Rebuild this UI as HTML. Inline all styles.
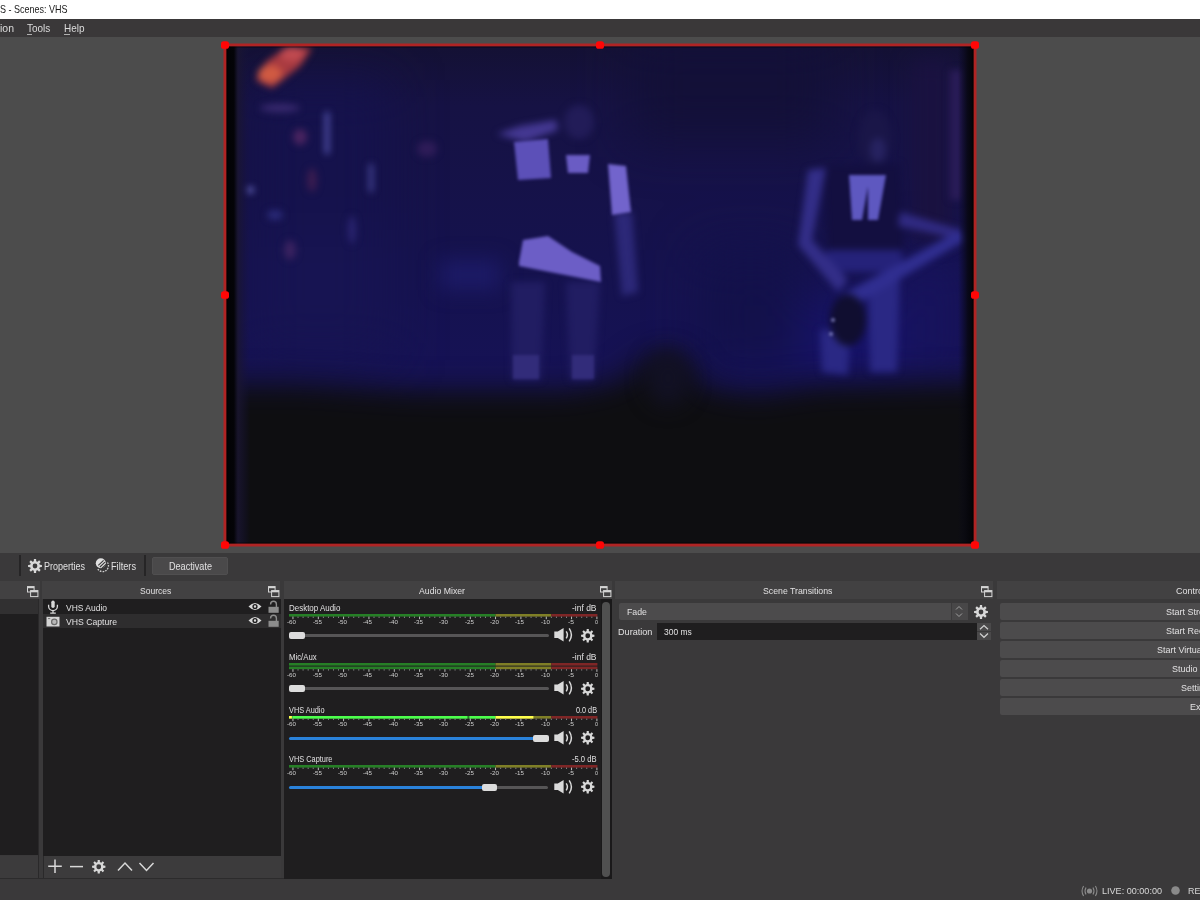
<!DOCTYPE html>
<html><head><meta charset="utf-8">
<style>
*{margin:0;padding:0;box-sizing:border-box}
html,body{width:1200px;height:900px;overflow:hidden;background:#3a393a;font-family:"Liberation Sans",sans-serif;color:#e1e0e1}
.a{position:absolute}
.t{position:absolute;white-space:nowrap}
svg{overflow:visible}
</style></head><body>
<div class="a" style="left:0px;top:0px;width:1200px;height:19px;background:#ffffff;"></div>
<div class="t" style="left:0.00px;top:3.77px;font-size:11.5px;line-height:11.5px;color:#1b1b1b;transform:scaleX(0.783);transform-origin:0 0;">S - Scenes: VHS</div>
<div class="a" style="left:0px;top:19px;width:1200px;height:18px;background:#3a3839;"></div>
<div class="t" style="left:0.00px;top:22.97px;font-size:10.9px;line-height:10.9px;color:#dcdcdc;transform:scaleX(0.962);transform-origin:0 0;">ion</div>
<div class="t" style="left:26.60px;top:22.97px;font-size:10.9px;line-height:10.9px;color:#dcdcdc;transform:scaleX(0.915);transform-origin:0 0;">Tools</div>
<div class="a" style="left:26.6px;top:33.6px;width:5px;height:1px;background:#b0b0b0;"></div>
<div class="t" style="left:63.80px;top:22.97px;font-size:10.9px;line-height:10.9px;color:#dcdcdc;transform:scaleX(0.915);transform-origin:0 0;">Help</div>
<div class="a" style="left:63.8px;top:33.6px;width:6px;height:1px;background:#b0b0b0;"></div>
<div class="a" style="left:0px;top:37px;width:1200px;height:516px;background:#4c4c4c;"></div>
<!-- video -->
<svg class="a" style="left:0;top:0" width="1200" height="560" viewBox="0 0 1200 560">
<defs>
<filter id="b1" color-interpolation-filters="sRGB" x="-50%" y="-50%" width="200%" height="200%"><feGaussianBlur stdDeviation="1.8"/></filter>
<filter id="b3" color-interpolation-filters="sRGB" x="-50%" y="-50%" width="200%" height="200%"><feGaussianBlur stdDeviation="3.5"/></filter>
<filter id="b8" color-interpolation-filters="sRGB" x="-50%" y="-50%" width="200%" height="200%"><feGaussianBlur stdDeviation="10"/></filter>
<filter id="b14" color-interpolation-filters="sRGB" x="-50%" y="-50%" width="200%" height="200%"><feGaussianBlur stdDeviation="15"/></filter>
<filter id="b20" color-interpolation-filters="sRGB" x="-50%" y="-50%" width="200%" height="200%"><feGaussianBlur stdDeviation="25"/></filter>
<linearGradient id="vbg" x1="0" y1="46" x2="0" y2="544" gradientUnits="userSpaceOnUse">
<stop offset="0" stop-color="#141134"/>
<stop offset="0.12" stop-color="#161244"/>
<stop offset="0.45" stop-color="#15124e"/>
<stop offset="0.68" stop-color="#161256"/>
<stop offset="0.8" stop-color="#111022"/>
<stop offset="1" stop-color="#0e0e10"/>
</linearGradient>
<linearGradient id="lstrip" x1="226" y1="0" x2="250" y2="0" gradientUnits="userSpaceOnUse">
<stop offset="0" stop-color="#020204" stop-opacity="1"/>
<stop offset="0.33" stop-color="#040408" stop-opacity="1"/>
<stop offset="0.5" stop-color="#1a1630" stop-opacity="0.85"/>
<stop offset="1" stop-color="#16123a" stop-opacity="0"/>
</linearGradient>
<linearGradient id="rstrip" x1="974" y1="0" x2="958" y2="0" gradientUnits="userSpaceOnUse">
<stop offset="0" stop-color="#020204" stop-opacity="1"/>
<stop offset="0.4" stop-color="#06060c" stop-opacity="0.8"/>
<stop offset="1" stop-color="#08081a" stop-opacity="0"/>
</linearGradient>
<clipPath id="vclip"><rect x="226" y="46" width="748" height="498"/></clipPath>
</defs>
<g clip-path="url(#vclip)">
<rect x="226" y="46" width="748" height="498" fill="url(#vbg)"/>
<g filter="url(#b20)">
<rect x="250" y="80" width="140" height="150" fill="#15124c"/>
<rect x="250" y="230" width="140" height="130" fill="#171452"/>
<rect x="630" y="30" width="200" height="110" fill="#131038"/>
<rect x="890" y="250" width="80" height="140" fill="#17135c"/>
<rect x="700" y="300" width="200" height="80" fill="#17136a"/>
<rect x="700" y="250" width="100" height="120" fill="#13114a"/>
</g>
<g filter="url(#b8)">
<rect x="912" y="60" width="40" height="180" fill="#1a1240"/>
<rect x="440" y="260" width="60" height="30" fill="#1c1a66"/>
</g>
<g filter="url(#b3)">
<path d="M256 80 L266 62 L288 46 L312 48 L300 66 L272 88 Z" fill="#a83a40"/>
<ellipse cx="270" cy="74" rx="12" ry="9" fill="#d05a42"/>
<ellipse cx="292" cy="54" rx="12" ry="7" fill="#c04a50"/>
<rect x="325" y="112" width="4" height="42" fill="#5a5ab4"/>
<rect x="369" y="164" width="4" height="28" fill="#48489a"/>
<ellipse cx="300" cy="137" rx="7" ry="8" fill="#4a2460"/>
<ellipse cx="290" cy="250" rx="6" ry="10" fill="#3a2260"/>
<ellipse cx="312" cy="180" rx="5" ry="12" fill="#3a1c50"/>
<ellipse cx="275" cy="215" rx="8" ry="5" fill="#2a2a78"/>
<ellipse cx="352" cy="230" rx="4" ry="14" fill="#2a2470"/>
<ellipse cx="427" cy="149" rx="10" ry="8" fill="#2e1c58"/>
<ellipse cx="280" cy="108" rx="20" ry="4" fill="#3a2a70"/>
<rect x="950" y="70" width="12" height="130" fill="#2a1c58"/>
<ellipse cx="250" cy="190" rx="4" ry="3" fill="#6a6ac0"/>
</g>
<g filter="url(#b14)">
<path d="M190 384 L226 384 L300 384 L412 392 L569 392 L618 382 L640 362 L664 352 L690 364 L704 388 L756 396 L819 386 L900 384 L974 382 L1010 382 L1010 580 L190 580 Z" fill="#0e0e11"/>
</g>
<g filter="url(#b8)">
<ellipse cx="668" cy="378" rx="22" ry="28" fill="#121124"/>
</g>
<g filter="url(#b3)">
<path d="M511 282 L545 282 L541 380 L512 380 Z" fill="#211d62"/>
<path d="M566 282 L600 282 L594 380 L570 380 Z" fill="#211d62"/>
<path d="M614 212 L632 212 L638 292 L622 296 Z" fill="#2c2878"/>
<path d="M497 134 L520 126 L556 120 L558 130 L525 142 Z" fill="#443892"/>
<ellipse cx="579" cy="122" rx="15" ry="17" fill="#221c58"/>
</g>
<g filter="url(#b1)">
<path d="M514 142 L548 139 L551 178 L518 180 Z" fill="#5c50b8"/>
<path d="M566 155 L590 155 L588 173 L568 173 Z" fill="#6a5cc4"/>
<path d="M608 164 L626 166 L631 212 L612 215 Z" fill="#7264cc"/>
<path d="M519 262 L523 240 L548 236 L572 252 L600 266 L601 282 L519 266 Z" fill="#6c5ec6"/>
<rect x="513" y="355" width="26" height="24" fill="#322c7a"/>
<rect x="572" y="355" width="22" height="24" fill="#322c7a"/>
</g>
<g filter="url(#b3)">
<ellipse cx="875" cy="138" rx="17" ry="28" fill="#1a1648"/>
<ellipse cx="878" cy="150" rx="8" ry="12" fill="#262260"/>
<path d="M824 166 L900 164 L904 250 L828 252 Z" fill="#130f40"/>
<path d="M826 250 L902 250 L902 272 L828 272 Z" fill="#25227a"/>
<path d="M808 170 L826 168 L812 240 L848 280 L838 292 L798 245 Z" fill="#332e88"/>
<path d="M900 212 L962 230 L963 240 L898 226 Z" fill="#302a82"/>
<path d="M868 282 L900 272 L897 372 L870 372 Z" fill="#2a2884"/>
<path d="M820 330 L850 330 L848 375 L822 372 Z" fill="#2a2884"/>
<path d="M840 296 L960 230 L966 240 L850 308 Z" fill="#302e90"/>
<ellipse cx="848" cy="320" rx="18" ry="26" fill="#100e30"/>
</g>
<g filter="url(#b1)">
<path d="M849 175 L870 175 L862 220 L852 220 Z" fill="#5e58c0"/>
<path d="M868 175 L886 175 L878 220 L868 220 Z" fill="#5e58c0"/>
<circle cx="833" cy="320" r="1.8" fill="#9090d0"/><circle cx="831" cy="334" r="1.8" fill="#9090d0"/>
</g>
</g>
<rect x="226" y="46" width="24" height="498" fill="url(#lstrip)"/>
<rect x="958" y="46" width="16" height="498" fill="url(#rstrip)"/>
<rect x="225" y="45" width="750" height="500" fill="none" stroke="#b02424" stroke-width="3"/>
<rect x="227" y="47" width="746" height="496" fill="none" stroke="#000" stroke-opacity="0.5" stroke-width="1"/>
<g fill="#ff0606"><rect x="221" y="41.2" width="8" height="7.6" rx="2.6"/><rect x="596" y="41.2" width="8" height="7.6" rx="2.6"/><rect x="971" y="41.2" width="8" height="7.6" rx="2.6"/><rect x="221" y="291.2" width="8" height="7.6" rx="2.6"/><rect x="971" y="291.2" width="8" height="7.6" rx="2.6"/><rect x="221" y="541.2" width="8" height="7.6" rx="2.6"/><rect x="596" y="541.2" width="8" height="7.6" rx="2.6"/><rect x="971" y="541.2" width="8" height="7.6" rx="2.6"/></g>
</svg>

<div class="a" style="left:0px;top:553px;width:1200px;height:28px;background:#3a393a;"></div>
<div class="a" style="left:19px;top:555px;width:2px;height:21px;background:#262526;"></div>
<div class="a" style="left:144px;top:555px;width:2px;height:21px;background:#262526;"></div>
<svg class="a" style="left:27.700000000000003px;top:558.7px" width="14" height="14" viewBox="0 0 14 14"><path d="M11.82 5.80 L13.91 5.90 L13.91 8.10 L11.82 8.20 L11.26 9.56 L12.66 11.11 L11.11 12.66 L9.56 11.26 L8.20 11.82 L8.10 13.91 L5.90 13.91 L5.80 11.82 L4.44 11.26 L2.89 12.66 L1.34 11.11 L2.74 9.56 L2.18 8.20 L0.09 8.10 L0.09 5.90 L2.18 5.80 L2.74 4.44 L1.34 2.89 L2.89 1.34 L4.44 2.74 L5.80 2.18 L5.90 0.09 L8.10 0.09 L8.20 2.18 L9.56 2.74 L11.11 1.34 L12.66 2.89 L11.26 4.44 Z M9.38 7.00 A2.3800000000000003 2.3800000000000003 0 1 0 4.62 7.00 A2.3800000000000003 2.3800000000000003 0 1 0 9.38 7.00 Z" fill="#d8d8d8" fill-rule="evenodd"/></svg>
<div class="t" style="left:44.00px;top:561.01px;font-size:10.5px;line-height:10.5px;color:#e1e0e1;transform:scaleX(0.856);transform-origin:0 0;">Properties</div>
<svg class="a" style="left:94px;top:556px" width="17" height="18" viewBox="0 0 17 18"><path d="M13.5 6.5 A5.6 5.6 0 1 1 3.8 13" fill="none" stroke="#d0d0d0" stroke-width="1.3" stroke-dasharray="1.6 1.1"/><circle cx="6.8" cy="7.2" r="5" fill="#e0e0e0"/><path d="M4.3 9.3 L9.6 4.4 M5.9 11 L11 6.1 M7.8 12.3 L12 8.4" stroke="#3a393a" stroke-width="1.1"/></svg>
<div class="t" style="left:111.00px;top:561.01px;font-size:10.5px;line-height:10.5px;color:#e1e0e1;transform:scaleX(0.875);transform-origin:0 0;">Filters</div>
<div class="a" style="left:152px;top:556.5px;width:76.3px;height:18.7px;background:#4a494a;border-radius:2px;border:1px solid #504f50;"></div>
<div class="t" style="left:168.50px;top:561.01px;font-size:10.5px;line-height:10.5px;color:#e1e0e1;transform:scaleX(0.866);transform-origin:0 0;">Deactivate</div>
<div class="a" style="left:0px;top:581px;width:40px;height:18px;background:#424142;"></div>
<svg class="a" style="left:27px;top:585.5px" width="12" height="12" viewBox="0 0 12 12"><rect x="0.5" y="0.6" width="6.6" height="5.4" fill="none" stroke="#d4d4d4" stroke-width="1"/><rect x="0.5" y="0.6" width="6.6" height="1.6" fill="#d4d4d4"/><rect x="3.6" y="4.6" width="7.3" height="6" fill="#424142" stroke="#d4d4d4" stroke-width="1"/><rect x="3.6" y="4.6" width="7.3" height="1.7" fill="#d4d4d4"/></svg>
<div class="a" style="left:42px;top:581px;width:238px;height:18px;background:#424142;"></div>
<div class="t" style="left:139.70px;top:585.70px;font-size:9.8px;line-height:9.8px;color:#e1e0e1;transform:scaleX(0.873);transform-origin:0 0;">Sources</div>
<svg class="a" style="left:268px;top:585.5px" width="12" height="12" viewBox="0 0 12 12"><rect x="0.5" y="0.6" width="6.6" height="5.4" fill="none" stroke="#d4d4d4" stroke-width="1"/><rect x="0.5" y="0.6" width="6.6" height="1.6" fill="#d4d4d4"/><rect x="3.6" y="4.6" width="7.3" height="6" fill="#424142" stroke="#d4d4d4" stroke-width="1"/><rect x="3.6" y="4.6" width="7.3" height="1.7" fill="#d4d4d4"/></svg>
<div class="a" style="left:284px;top:581px;width:328px;height:18px;background:#424142;"></div>
<div class="t" style="left:418.70px;top:585.70px;font-size:9.8px;line-height:9.8px;color:#e1e0e1;transform:scaleX(0.889);transform-origin:0 0;">Audio Mixer</div>
<svg class="a" style="left:600px;top:585.5px" width="12" height="12" viewBox="0 0 12 12"><rect x="0.5" y="0.6" width="6.6" height="5.4" fill="none" stroke="#d4d4d4" stroke-width="1"/><rect x="0.5" y="0.6" width="6.6" height="1.6" fill="#d4d4d4"/><rect x="3.6" y="4.6" width="7.3" height="6" fill="#424142" stroke="#d4d4d4" stroke-width="1"/><rect x="3.6" y="4.6" width="7.3" height="1.7" fill="#d4d4d4"/></svg>
<div class="a" style="left:615px;top:581px;width:378px;height:18px;background:#424142;"></div>
<div class="t" style="left:763.25px;top:585.70px;font-size:9.8px;line-height:9.8px;color:#e1e0e1;transform:scaleX(0.892);transform-origin:0 0;">Scene Transitions</div>
<svg class="a" style="left:981px;top:585.5px" width="12" height="12" viewBox="0 0 12 12"><rect x="0.5" y="0.6" width="6.6" height="5.4" fill="none" stroke="#d4d4d4" stroke-width="1"/><rect x="0.5" y="0.6" width="6.6" height="1.6" fill="#d4d4d4"/><rect x="3.6" y="4.6" width="7.3" height="6" fill="#424142" stroke="#d4d4d4" stroke-width="1"/><rect x="3.6" y="4.6" width="7.3" height="1.7" fill="#d4d4d4"/></svg>
<div class="a" style="left:997px;top:581px;width:203px;height:18px;background:#424142;"></div>
<div class="t" style="left:1175.60px;top:585.70px;font-size:9.8px;line-height:9.8px;color:#e1e0e1;transform:scaleX(0.916);transform-origin:0 0;">Controls</div>
<div class="a" style="left:0px;top:599px;width:38px;height:256px;background:#1f1e1f;"></div>
<div class="a" style="left:38px;top:599px;width:1px;height:279px;background:#2a292a;"></div>
<div class="a" style="left:42.5px;top:599px;width:1px;height:279px;background:#2a292a;"></div>
<div class="a" style="left:0px;top:599px;width:38px;height:15px;background:#313031;"></div>
<div class="a" style="left:0px;top:855.75px;width:38px;height:22.25px;background:#3c3b3c;"></div>
<div class="a" style="left:42.5px;top:599px;width:238px;height:256.5px;background:#1f1e1f;"></div>
<div class="a" style="left:42.5px;top:613.7px;width:238px;height:14.3px;background:#2e2d2e;"></div>
<svg class="a" style="left:47px;top:600px" width="12" height="14" viewBox="0 0 12 14"><rect x="4.3" y="0.5" width="3.4" height="7.5" rx="1.7" fill="#d8d8d8"/><path d="M1.6 4.8 V6.3 A4.4 4.4 0 0 0 10.4 6.3 V4.8" fill="none" stroke="#d8d8d8" stroke-width="1.3"/><path d="M6 10.8 V13 M3.2 13.2 H8.8" stroke="#d8d8d8" stroke-width="1.2"/></svg>
<div class="t" style="left:66.00px;top:602.70px;font-size:9.8px;line-height:9.8px;color:#e1e0e1;transform:scaleX(0.865);transform-origin:0 0;">VHS Audio</div>
<svg class="a" style="left:45.5px;top:615.5px" width="14" height="11" viewBox="0 0 14 11"><rect x="0.5" y="0.8" width="13" height="9.7" fill="#d4d4d4"/><rect x="2" y="2" width="2.2" height="1.1" fill="#808080"/><circle cx="8.3" cy="5.9" r="2.7" fill="#b8b8b8" stroke="#6a6a6a" stroke-width="1.2"/></svg>
<div class="t" style="left:66.00px;top:616.70px;font-size:9.8px;line-height:9.8px;color:#e1e0e1;transform:scaleX(0.883);transform-origin:0 0;">VHS Capture</div>
<svg class="a" style="left:247.5px;top:602.2px" width="14" height="9" viewBox="0 0 14 9"><path d="M0.5 4.5 Q7 -2.5 13.5 4.5 Q7 11.5 0.5 4.5 Z" fill="#d8d8d8"/><circle cx="7" cy="4.5" r="2.6" fill="#1f1e1f"/><circle cx="7" cy="4.5" r="1.2" fill="#d8d8d8"/></svg>
<svg class="a" style="left:267.5px;top:600.7px" width="11" height="12" viewBox="0 0 11 12"><path d="M2.6 3.6 V3.2 A2.9 2.9 0 0 1 8.4 3.2 V6" fill="none" stroke="#8c8c8c" stroke-width="1.4"/><rect x="0.5" y="5.8" width="10.2" height="6" fill="#8c8c8c"/></svg>
<svg class="a" style="left:247.5px;top:616.1px" width="14" height="9" viewBox="0 0 14 9"><path d="M0.5 4.5 Q7 -2.5 13.5 4.5 Q7 11.5 0.5 4.5 Z" fill="#d8d8d8"/><circle cx="7" cy="4.5" r="2.6" fill="#1f1e1f"/><circle cx="7" cy="4.5" r="1.2" fill="#d8d8d8"/></svg>
<svg class="a" style="left:267.5px;top:614.6px" width="11" height="12" viewBox="0 0 11 12"><path d="M2.6 3.6 V3.2 A2.9 2.9 0 0 1 8.4 3.2 V6" fill="none" stroke="#8c8c8c" stroke-width="1.4"/><rect x="0.5" y="5.8" width="10.2" height="6" fill="#8c8c8c"/></svg>
<div class="a" style="left:43.5px;top:855.75px;width:237px;height:22.25px;background:#3c3b3c;"></div>
<div class="a" style="left:0px;top:878px;width:612px;height:1px;background:#2c2b2c;"></div>
<svg class="a" style="left:47px;top:856px" width="110" height="20" viewBox="0 0 110 20"><path d="M8 3.5 V17 M1.2 10.3 H14.8" stroke="#d8d8d8" stroke-width="1.5"/><path d="M23 10.6 H36" stroke="#d8d8d8" stroke-width="1.5"/><path d="M71 14.5 L78 7 L85 14.5" fill="none" stroke="#d8d8d8" stroke-width="1.5"/><path d="M92.5 7 L99.5 14.5 L106.5 7" fill="none" stroke="#d8d8d8" stroke-width="1.5"/></svg>
<svg class="a" style="left:91.65px;top:860.15px" width="13.5" height="13.5" viewBox="0 0 13.5 13.5"><path d="M11.40 5.59 L13.42 5.69 L13.42 7.81 L11.40 7.91 L10.86 9.22 L12.21 10.72 L10.72 12.21 L9.22 10.86 L7.91 11.40 L7.81 13.42 L5.69 13.42 L5.59 11.40 L4.28 10.86 L2.78 12.21 L1.29 10.72 L2.64 9.22 L2.10 7.91 L0.08 7.81 L0.08 5.69 L2.10 5.59 L2.64 4.28 L1.29 2.78 L2.78 1.29 L4.28 2.64 L5.59 2.10 L5.69 0.08 L7.81 0.08 L7.91 2.10 L9.22 2.64 L10.72 1.29 L12.21 2.78 L10.86 4.28 Z M9.04 6.75 A2.2950000000000004 2.2950000000000004 0 1 0 4.46 6.75 A2.2950000000000004 2.2950000000000004 0 1 0 9.04 6.75 Z" fill="#d8d8d8" fill-rule="evenodd"/></svg>
<div class="a" style="left:284px;top:599px;width:328px;height:279.5px;background:#1f1e1f;"></div>
<div class="a" style="left:600.5px;top:599px;width:11px;height:279.5px;background:#1a191a;"></div>
<div class="a" style="left:602px;top:601.5px;width:8px;height:275.5px;background:#505050;border-radius:4px;"></div>
<div class="t" style="left:288.70px;top:604.12px;font-size:8.6px;line-height:8.6px;color:#e1e0e1;transform:scaleX(0.926);transform-origin:0 0;">Desktop Audio</div>
<div class="t" style="left:572.30px;top:604.12px;font-size:8.6px;line-height:8.6px;color:#e1e0e1;transform:scaleX(0.986);transform-origin:0 0;">-inf dB</div>
<svg class="a" style="left:288.6px;top:613.5px" width="310" height="12" viewBox="0 0 310 12"><rect x="0" y="0.0" width="206.54" height="2.6" fill="#267f26"/><rect x="206.54" y="0.0" width="55.73" height="2.6" fill="#7f7f26"/><rect x="262.27" y="0.0" width="46.13" height="2.6" fill="#7f2626"/><rect x="3.50" y="2.6" width="0.9" height="2.6" fill="#cfcfcf"/><rect x="8.57" y="2.6" width="0.9" height="1.4" fill="#8a8a8a"/><rect x="13.63" y="2.6" width="0.9" height="1.4" fill="#8a8a8a"/><rect x="18.70" y="2.6" width="0.9" height="1.4" fill="#8a8a8a"/><rect x="23.76" y="2.6" width="0.9" height="1.4" fill="#8a8a8a"/><rect x="28.83" y="2.6" width="0.9" height="2.6" fill="#cfcfcf"/><rect x="33.90" y="2.6" width="0.9" height="1.4" fill="#8a8a8a"/><rect x="38.96" y="2.6" width="0.9" height="1.4" fill="#8a8a8a"/><rect x="44.03" y="2.6" width="0.9" height="1.4" fill="#8a8a8a"/><rect x="49.09" y="2.6" width="0.9" height="1.4" fill="#8a8a8a"/><rect x="54.16" y="2.6" width="0.9" height="2.6" fill="#cfcfcf"/><rect x="59.23" y="2.6" width="0.9" height="1.4" fill="#8a8a8a"/><rect x="64.29" y="2.6" width="0.9" height="1.4" fill="#8a8a8a"/><rect x="69.36" y="2.6" width="0.9" height="1.4" fill="#8a8a8a"/><rect x="74.42" y="2.6" width="0.9" height="1.4" fill="#8a8a8a"/><rect x="79.49" y="2.6" width="0.9" height="2.6" fill="#cfcfcf"/><rect x="84.56" y="2.6" width="0.9" height="1.4" fill="#8a8a8a"/><rect x="89.62" y="2.6" width="0.9" height="1.4" fill="#8a8a8a"/><rect x="94.69" y="2.6" width="0.9" height="1.4" fill="#8a8a8a"/><rect x="99.75" y="2.6" width="0.9" height="1.4" fill="#8a8a8a"/><rect x="104.82" y="2.6" width="0.9" height="2.6" fill="#cfcfcf"/><rect x="109.89" y="2.6" width="0.9" height="1.4" fill="#8a8a8a"/><rect x="114.95" y="2.6" width="0.9" height="1.4" fill="#8a8a8a"/><rect x="120.02" y="2.6" width="0.9" height="1.4" fill="#8a8a8a"/><rect x="125.08" y="2.6" width="0.9" height="1.4" fill="#8a8a8a"/><rect x="130.15" y="2.6" width="0.9" height="2.6" fill="#cfcfcf"/><rect x="135.22" y="2.6" width="0.9" height="1.4" fill="#8a8a8a"/><rect x="140.28" y="2.6" width="0.9" height="1.4" fill="#8a8a8a"/><rect x="145.35" y="2.6" width="0.9" height="1.4" fill="#8a8a8a"/><rect x="150.41" y="2.6" width="0.9" height="1.4" fill="#8a8a8a"/><rect x="155.48" y="2.6" width="0.9" height="2.6" fill="#cfcfcf"/><rect x="160.55" y="2.6" width="0.9" height="1.4" fill="#8a8a8a"/><rect x="165.61" y="2.6" width="0.9" height="1.4" fill="#8a8a8a"/><rect x="170.68" y="2.6" width="0.9" height="1.4" fill="#8a8a8a"/><rect x="175.74" y="2.6" width="0.9" height="1.4" fill="#8a8a8a"/><rect x="180.81" y="2.6" width="0.9" height="2.6" fill="#cfcfcf"/><rect x="185.88" y="2.6" width="0.9" height="1.4" fill="#8a8a8a"/><rect x="190.94" y="2.6" width="0.9" height="1.4" fill="#8a8a8a"/><rect x="196.01" y="2.6" width="0.9" height="1.4" fill="#8a8a8a"/><rect x="201.07" y="2.6" width="0.9" height="1.4" fill="#8a8a8a"/><rect x="206.14" y="2.6" width="0.9" height="2.6" fill="#cfcfcf"/><rect x="211.21" y="2.6" width="0.9" height="1.4" fill="#8a8a8a"/><rect x="216.27" y="2.6" width="0.9" height="1.4" fill="#8a8a8a"/><rect x="221.34" y="2.6" width="0.9" height="1.4" fill="#8a8a8a"/><rect x="226.40" y="2.6" width="0.9" height="1.4" fill="#8a8a8a"/><rect x="231.47" y="2.6" width="0.9" height="2.6" fill="#cfcfcf"/><rect x="236.54" y="2.6" width="0.9" height="1.4" fill="#8a8a8a"/><rect x="241.60" y="2.6" width="0.9" height="1.4" fill="#8a8a8a"/><rect x="246.67" y="2.6" width="0.9" height="1.4" fill="#8a8a8a"/><rect x="251.73" y="2.6" width="0.9" height="1.4" fill="#8a8a8a"/><rect x="256.80" y="2.6" width="0.9" height="2.6" fill="#cfcfcf"/><rect x="261.87" y="2.6" width="0.9" height="1.4" fill="#8a8a8a"/><rect x="266.93" y="2.6" width="0.9" height="1.4" fill="#8a8a8a"/><rect x="272.00" y="2.6" width="0.9" height="1.4" fill="#8a8a8a"/><rect x="277.06" y="2.6" width="0.9" height="1.4" fill="#8a8a8a"/><rect x="282.13" y="2.6" width="0.9" height="2.6" fill="#cfcfcf"/><rect x="287.20" y="2.6" width="0.9" height="1.4" fill="#8a8a8a"/><rect x="292.26" y="2.6" width="0.9" height="1.4" fill="#8a8a8a"/><rect x="297.33" y="2.6" width="0.9" height="1.4" fill="#8a8a8a"/><rect x="302.39" y="2.6" width="0.9" height="1.4" fill="#8a8a8a"/><rect x="307.46" y="2.6" width="0.9" height="2.6" fill="#cfcfcf"/></svg>
<div class="t" style="left:287.40px;top:619.96px;font-size:5.6px;line-height:5.6px;color:#d0d0d0;transform:scaleX(1.114);transform-origin:0 0;">-60</div>
<div class="t" style="left:312.73px;top:619.96px;font-size:5.6px;line-height:5.6px;color:#d0d0d0;transform:scaleX(1.114);transform-origin:0 0;">-55</div>
<div class="t" style="left:338.06px;top:619.96px;font-size:5.6px;line-height:5.6px;color:#d0d0d0;transform:scaleX(1.114);transform-origin:0 0;">-50</div>
<div class="t" style="left:363.39px;top:619.96px;font-size:5.6px;line-height:5.6px;color:#d0d0d0;transform:scaleX(1.114);transform-origin:0 0;">-45</div>
<div class="t" style="left:388.72px;top:619.96px;font-size:5.6px;line-height:5.6px;color:#d0d0d0;transform:scaleX(1.114);transform-origin:0 0;">-40</div>
<div class="t" style="left:414.05px;top:619.96px;font-size:5.6px;line-height:5.6px;color:#d0d0d0;transform:scaleX(1.114);transform-origin:0 0;">-35</div>
<div class="t" style="left:439.38px;top:619.96px;font-size:5.6px;line-height:5.6px;color:#d0d0d0;transform:scaleX(1.114);transform-origin:0 0;">-30</div>
<div class="t" style="left:464.71px;top:619.96px;font-size:5.6px;line-height:5.6px;color:#d0d0d0;transform:scaleX(1.114);transform-origin:0 0;">-25</div>
<div class="t" style="left:490.04px;top:619.96px;font-size:5.6px;line-height:5.6px;color:#d0d0d0;transform:scaleX(1.114);transform-origin:0 0;">-20</div>
<div class="t" style="left:515.37px;top:619.96px;font-size:5.6px;line-height:5.6px;color:#d0d0d0;transform:scaleX(1.114);transform-origin:0 0;">-15</div>
<div class="t" style="left:540.70px;top:619.96px;font-size:5.6px;line-height:5.6px;color:#d0d0d0;transform:scaleX(1.114);transform-origin:0 0;">-10</div>
<div class="t" style="left:567.53px;top:619.96px;font-size:5.6px;line-height:5.6px;color:#d0d0d0;transform:scaleX(1.208);transform-origin:0 0;">-5</div>
<div class="t" style="left:594.96px;top:619.96px;font-size:5.6px;line-height:5.6px;color:#d0d0d0;transform:scaleX(0.965);transform-origin:0 0;">0</div>
<div class="a" style="left:289px;top:634.1px;width:259.5px;height:3.2px;background:#565556;border-radius:1.5px;"></div>
<div class="a" style="left:289.0px;top:632.2px;width:15.5px;height:7px;background:#dcdcdc;border-radius:2px;"></div>
<svg class="a" style="left:553.8px;top:628.4000000000001px" width="20" height="15" viewBox="0 0 20 15"><path d="M0.3 3.6 H3.8 L9.6 0 V13.6 L3.8 10 H0.3 Z" fill="#dadada"/><path d="M12.2 3.4 Q14.6 6.8 12.2 10.4" fill="none" stroke="#dadada" stroke-width="1.5"/><path d="M15.2 0.3 Q19.6 6.8 15.2 13.4" fill="none" stroke="#dadada" stroke-width="1.5"/></svg>
<svg class="a" style="left:580.75px;top:628.95px" width="13.5" height="13.5" viewBox="0 0 13.5 13.5"><path d="M11.40 5.59 L13.42 5.69 L13.42 7.81 L11.40 7.91 L10.86 9.22 L12.21 10.72 L10.72 12.21 L9.22 10.86 L7.91 11.40 L7.81 13.42 L5.69 13.42 L5.59 11.40 L4.28 10.86 L2.78 12.21 L1.29 10.72 L2.64 9.22 L2.10 7.91 L0.08 7.81 L0.08 5.69 L2.10 5.59 L2.64 4.28 L1.29 2.78 L2.78 1.29 L4.28 2.64 L5.59 2.10 L5.69 0.08 L7.81 0.08 L7.91 2.10 L9.22 2.64 L10.72 1.29 L12.21 2.78 L10.86 4.28 Z M9.04 6.75 A2.2950000000000004 2.2950000000000004 0 1 0 4.46 6.75 A2.2950000000000004 2.2950000000000004 0 1 0 9.04 6.75 Z" fill="#d8d8d8" fill-rule="evenodd"/></svg>
<div class="t" style="left:288.70px;top:653.42px;font-size:8.6px;line-height:8.6px;color:#e1e0e1;transform:scaleX(0.905);transform-origin:0 0;">Mic/Aux</div>
<div class="t" style="left:572.30px;top:653.42px;font-size:8.6px;line-height:8.6px;color:#e1e0e1;transform:scaleX(0.986);transform-origin:0 0;">-inf dB</div>
<svg class="a" style="left:288.6px;top:662.8px" width="310" height="12" viewBox="0 0 310 12"><rect x="0" y="0.0" width="206.54" height="2.6" fill="#267f26"/><rect x="206.54" y="0.0" width="55.73" height="2.6" fill="#7f7f26"/><rect x="262.27" y="0.0" width="46.13" height="2.6" fill="#7f2626"/><rect x="0" y="3.6" width="206.54" height="2.6" fill="#267f26"/><rect x="206.54" y="3.6" width="55.73" height="2.6" fill="#7f7f26"/><rect x="262.27" y="3.6" width="46.13" height="2.6" fill="#7f2626"/><rect x="3.50" y="6.2" width="0.9" height="2.6" fill="#cfcfcf"/><rect x="8.57" y="6.2" width="0.9" height="1.4" fill="#8a8a8a"/><rect x="13.63" y="6.2" width="0.9" height="1.4" fill="#8a8a8a"/><rect x="18.70" y="6.2" width="0.9" height="1.4" fill="#8a8a8a"/><rect x="23.76" y="6.2" width="0.9" height="1.4" fill="#8a8a8a"/><rect x="28.83" y="6.2" width="0.9" height="2.6" fill="#cfcfcf"/><rect x="33.90" y="6.2" width="0.9" height="1.4" fill="#8a8a8a"/><rect x="38.96" y="6.2" width="0.9" height="1.4" fill="#8a8a8a"/><rect x="44.03" y="6.2" width="0.9" height="1.4" fill="#8a8a8a"/><rect x="49.09" y="6.2" width="0.9" height="1.4" fill="#8a8a8a"/><rect x="54.16" y="6.2" width="0.9" height="2.6" fill="#cfcfcf"/><rect x="59.23" y="6.2" width="0.9" height="1.4" fill="#8a8a8a"/><rect x="64.29" y="6.2" width="0.9" height="1.4" fill="#8a8a8a"/><rect x="69.36" y="6.2" width="0.9" height="1.4" fill="#8a8a8a"/><rect x="74.42" y="6.2" width="0.9" height="1.4" fill="#8a8a8a"/><rect x="79.49" y="6.2" width="0.9" height="2.6" fill="#cfcfcf"/><rect x="84.56" y="6.2" width="0.9" height="1.4" fill="#8a8a8a"/><rect x="89.62" y="6.2" width="0.9" height="1.4" fill="#8a8a8a"/><rect x="94.69" y="6.2" width="0.9" height="1.4" fill="#8a8a8a"/><rect x="99.75" y="6.2" width="0.9" height="1.4" fill="#8a8a8a"/><rect x="104.82" y="6.2" width="0.9" height="2.6" fill="#cfcfcf"/><rect x="109.89" y="6.2" width="0.9" height="1.4" fill="#8a8a8a"/><rect x="114.95" y="6.2" width="0.9" height="1.4" fill="#8a8a8a"/><rect x="120.02" y="6.2" width="0.9" height="1.4" fill="#8a8a8a"/><rect x="125.08" y="6.2" width="0.9" height="1.4" fill="#8a8a8a"/><rect x="130.15" y="6.2" width="0.9" height="2.6" fill="#cfcfcf"/><rect x="135.22" y="6.2" width="0.9" height="1.4" fill="#8a8a8a"/><rect x="140.28" y="6.2" width="0.9" height="1.4" fill="#8a8a8a"/><rect x="145.35" y="6.2" width="0.9" height="1.4" fill="#8a8a8a"/><rect x="150.41" y="6.2" width="0.9" height="1.4" fill="#8a8a8a"/><rect x="155.48" y="6.2" width="0.9" height="2.6" fill="#cfcfcf"/><rect x="160.55" y="6.2" width="0.9" height="1.4" fill="#8a8a8a"/><rect x="165.61" y="6.2" width="0.9" height="1.4" fill="#8a8a8a"/><rect x="170.68" y="6.2" width="0.9" height="1.4" fill="#8a8a8a"/><rect x="175.74" y="6.2" width="0.9" height="1.4" fill="#8a8a8a"/><rect x="180.81" y="6.2" width="0.9" height="2.6" fill="#cfcfcf"/><rect x="185.88" y="6.2" width="0.9" height="1.4" fill="#8a8a8a"/><rect x="190.94" y="6.2" width="0.9" height="1.4" fill="#8a8a8a"/><rect x="196.01" y="6.2" width="0.9" height="1.4" fill="#8a8a8a"/><rect x="201.07" y="6.2" width="0.9" height="1.4" fill="#8a8a8a"/><rect x="206.14" y="6.2" width="0.9" height="2.6" fill="#cfcfcf"/><rect x="211.21" y="6.2" width="0.9" height="1.4" fill="#8a8a8a"/><rect x="216.27" y="6.2" width="0.9" height="1.4" fill="#8a8a8a"/><rect x="221.34" y="6.2" width="0.9" height="1.4" fill="#8a8a8a"/><rect x="226.40" y="6.2" width="0.9" height="1.4" fill="#8a8a8a"/><rect x="231.47" y="6.2" width="0.9" height="2.6" fill="#cfcfcf"/><rect x="236.54" y="6.2" width="0.9" height="1.4" fill="#8a8a8a"/><rect x="241.60" y="6.2" width="0.9" height="1.4" fill="#8a8a8a"/><rect x="246.67" y="6.2" width="0.9" height="1.4" fill="#8a8a8a"/><rect x="251.73" y="6.2" width="0.9" height="1.4" fill="#8a8a8a"/><rect x="256.80" y="6.2" width="0.9" height="2.6" fill="#cfcfcf"/><rect x="261.87" y="6.2" width="0.9" height="1.4" fill="#8a8a8a"/><rect x="266.93" y="6.2" width="0.9" height="1.4" fill="#8a8a8a"/><rect x="272.00" y="6.2" width="0.9" height="1.4" fill="#8a8a8a"/><rect x="277.06" y="6.2" width="0.9" height="1.4" fill="#8a8a8a"/><rect x="282.13" y="6.2" width="0.9" height="2.6" fill="#cfcfcf"/><rect x="287.20" y="6.2" width="0.9" height="1.4" fill="#8a8a8a"/><rect x="292.26" y="6.2" width="0.9" height="1.4" fill="#8a8a8a"/><rect x="297.33" y="6.2" width="0.9" height="1.4" fill="#8a8a8a"/><rect x="302.39" y="6.2" width="0.9" height="1.4" fill="#8a8a8a"/><rect x="307.46" y="6.2" width="0.9" height="2.6" fill="#cfcfcf"/></svg>
<div class="t" style="left:287.40px;top:672.86px;font-size:5.6px;line-height:5.6px;color:#d0d0d0;transform:scaleX(1.114);transform-origin:0 0;">-60</div>
<div class="t" style="left:312.73px;top:672.86px;font-size:5.6px;line-height:5.6px;color:#d0d0d0;transform:scaleX(1.114);transform-origin:0 0;">-55</div>
<div class="t" style="left:338.06px;top:672.86px;font-size:5.6px;line-height:5.6px;color:#d0d0d0;transform:scaleX(1.114);transform-origin:0 0;">-50</div>
<div class="t" style="left:363.39px;top:672.86px;font-size:5.6px;line-height:5.6px;color:#d0d0d0;transform:scaleX(1.114);transform-origin:0 0;">-45</div>
<div class="t" style="left:388.72px;top:672.86px;font-size:5.6px;line-height:5.6px;color:#d0d0d0;transform:scaleX(1.114);transform-origin:0 0;">-40</div>
<div class="t" style="left:414.05px;top:672.86px;font-size:5.6px;line-height:5.6px;color:#d0d0d0;transform:scaleX(1.114);transform-origin:0 0;">-35</div>
<div class="t" style="left:439.38px;top:672.86px;font-size:5.6px;line-height:5.6px;color:#d0d0d0;transform:scaleX(1.114);transform-origin:0 0;">-30</div>
<div class="t" style="left:464.71px;top:672.86px;font-size:5.6px;line-height:5.6px;color:#d0d0d0;transform:scaleX(1.114);transform-origin:0 0;">-25</div>
<div class="t" style="left:490.04px;top:672.86px;font-size:5.6px;line-height:5.6px;color:#d0d0d0;transform:scaleX(1.114);transform-origin:0 0;">-20</div>
<div class="t" style="left:515.37px;top:672.86px;font-size:5.6px;line-height:5.6px;color:#d0d0d0;transform:scaleX(1.114);transform-origin:0 0;">-15</div>
<div class="t" style="left:540.70px;top:672.86px;font-size:5.6px;line-height:5.6px;color:#d0d0d0;transform:scaleX(1.114);transform-origin:0 0;">-10</div>
<div class="t" style="left:567.53px;top:672.86px;font-size:5.6px;line-height:5.6px;color:#d0d0d0;transform:scaleX(1.208);transform-origin:0 0;">-5</div>
<div class="t" style="left:594.96px;top:672.86px;font-size:5.6px;line-height:5.6px;color:#d0d0d0;transform:scaleX(0.965);transform-origin:0 0;">0</div>
<div class="a" style="left:289px;top:687.0px;width:259.5px;height:3.2px;background:#565556;border-radius:1.5px;"></div>
<div class="a" style="left:289.0px;top:685.1px;width:15.5px;height:7px;background:#dcdcdc;border-radius:2px;"></div>
<svg class="a" style="left:553.8px;top:681.3000000000001px" width="20" height="15" viewBox="0 0 20 15"><path d="M0.3 3.6 H3.8 L9.6 0 V13.6 L3.8 10 H0.3 Z" fill="#dadada"/><path d="M12.2 3.4 Q14.6 6.8 12.2 10.4" fill="none" stroke="#dadada" stroke-width="1.5"/><path d="M15.2 0.3 Q19.6 6.8 15.2 13.4" fill="none" stroke="#dadada" stroke-width="1.5"/></svg>
<svg class="a" style="left:580.75px;top:681.85px" width="13.5" height="13.5" viewBox="0 0 13.5 13.5"><path d="M11.40 5.59 L13.42 5.69 L13.42 7.81 L11.40 7.91 L10.86 9.22 L12.21 10.72 L10.72 12.21 L9.22 10.86 L7.91 11.40 L7.81 13.42 L5.69 13.42 L5.59 11.40 L4.28 10.86 L2.78 12.21 L1.29 10.72 L2.64 9.22 L2.10 7.91 L0.08 7.81 L0.08 5.69 L2.10 5.59 L2.64 4.28 L1.29 2.78 L2.78 1.29 L4.28 2.64 L5.59 2.10 L5.69 0.08 L7.81 0.08 L7.91 2.10 L9.22 2.64 L10.72 1.29 L12.21 2.78 L10.86 4.28 Z M9.04 6.75 A2.2950000000000004 2.2950000000000004 0 1 0 4.46 6.75 A2.2950000000000004 2.2950000000000004 0 1 0 9.04 6.75 Z" fill="#d8d8d8" fill-rule="evenodd"/></svg>
<div class="t" style="left:288.70px;top:705.52px;font-size:8.6px;line-height:8.6px;color:#e1e0e1;transform:scaleX(0.855);transform-origin:0 0;">VHS Audio</div>
<div class="t" style="left:575.80px;top:705.52px;font-size:8.6px;line-height:8.6px;color:#e1e0e1;transform:scaleX(0.845);transform-origin:0 0;">0.0 dB</div>
<svg class="a" style="left:288.6px;top:716px" width="310" height="12" viewBox="0 0 310 12"><rect x="0" y="0.0" width="206.54" height="2.6" fill="#267f26"/><rect x="206.54" y="0.0" width="55.73" height="2.6" fill="#7f7f26"/><rect x="262.27" y="0.0" width="46.13" height="2.6" fill="#7f2626"/><rect x="0.00" y="0.0" width="2.90" height="2.6" fill="#ffff4c"/><rect x="3.40" y="0.0" width="175.00" height="2.6" fill="#4cff4c"/><rect x="180.40" y="0.0" width="26.14" height="2.6" fill="#4cff4c"/><rect x="206.54" y="0.0" width="37.86" height="2.6" fill="#ffff4c"/><rect x="3.50" y="2.6" width="0.9" height="2.6" fill="#cfcfcf"/><rect x="8.57" y="2.6" width="0.9" height="1.4" fill="#8a8a8a"/><rect x="13.63" y="2.6" width="0.9" height="1.4" fill="#8a8a8a"/><rect x="18.70" y="2.6" width="0.9" height="1.4" fill="#8a8a8a"/><rect x="23.76" y="2.6" width="0.9" height="1.4" fill="#8a8a8a"/><rect x="28.83" y="2.6" width="0.9" height="2.6" fill="#cfcfcf"/><rect x="33.90" y="2.6" width="0.9" height="1.4" fill="#8a8a8a"/><rect x="38.96" y="2.6" width="0.9" height="1.4" fill="#8a8a8a"/><rect x="44.03" y="2.6" width="0.9" height="1.4" fill="#8a8a8a"/><rect x="49.09" y="2.6" width="0.9" height="1.4" fill="#8a8a8a"/><rect x="54.16" y="2.6" width="0.9" height="2.6" fill="#cfcfcf"/><rect x="59.23" y="2.6" width="0.9" height="1.4" fill="#8a8a8a"/><rect x="64.29" y="2.6" width="0.9" height="1.4" fill="#8a8a8a"/><rect x="69.36" y="2.6" width="0.9" height="1.4" fill="#8a8a8a"/><rect x="74.42" y="2.6" width="0.9" height="1.4" fill="#8a8a8a"/><rect x="79.49" y="2.6" width="0.9" height="2.6" fill="#cfcfcf"/><rect x="84.56" y="2.6" width="0.9" height="1.4" fill="#8a8a8a"/><rect x="89.62" y="2.6" width="0.9" height="1.4" fill="#8a8a8a"/><rect x="94.69" y="2.6" width="0.9" height="1.4" fill="#8a8a8a"/><rect x="99.75" y="2.6" width="0.9" height="1.4" fill="#8a8a8a"/><rect x="104.82" y="2.6" width="0.9" height="2.6" fill="#cfcfcf"/><rect x="109.89" y="2.6" width="0.9" height="1.4" fill="#8a8a8a"/><rect x="114.95" y="2.6" width="0.9" height="1.4" fill="#8a8a8a"/><rect x="120.02" y="2.6" width="0.9" height="1.4" fill="#8a8a8a"/><rect x="125.08" y="2.6" width="0.9" height="1.4" fill="#8a8a8a"/><rect x="130.15" y="2.6" width="0.9" height="2.6" fill="#cfcfcf"/><rect x="135.22" y="2.6" width="0.9" height="1.4" fill="#8a8a8a"/><rect x="140.28" y="2.6" width="0.9" height="1.4" fill="#8a8a8a"/><rect x="145.35" y="2.6" width="0.9" height="1.4" fill="#8a8a8a"/><rect x="150.41" y="2.6" width="0.9" height="1.4" fill="#8a8a8a"/><rect x="155.48" y="2.6" width="0.9" height="2.6" fill="#cfcfcf"/><rect x="160.55" y="2.6" width="0.9" height="1.4" fill="#8a8a8a"/><rect x="165.61" y="2.6" width="0.9" height="1.4" fill="#8a8a8a"/><rect x="170.68" y="2.6" width="0.9" height="1.4" fill="#8a8a8a"/><rect x="175.74" y="2.6" width="0.9" height="1.4" fill="#8a8a8a"/><rect x="180.81" y="2.6" width="0.9" height="2.6" fill="#cfcfcf"/><rect x="185.88" y="2.6" width="0.9" height="1.4" fill="#8a8a8a"/><rect x="190.94" y="2.6" width="0.9" height="1.4" fill="#8a8a8a"/><rect x="196.01" y="2.6" width="0.9" height="1.4" fill="#8a8a8a"/><rect x="201.07" y="2.6" width="0.9" height="1.4" fill="#8a8a8a"/><rect x="206.14" y="2.6" width="0.9" height="2.6" fill="#cfcfcf"/><rect x="211.21" y="2.6" width="0.9" height="1.4" fill="#8a8a8a"/><rect x="216.27" y="2.6" width="0.9" height="1.4" fill="#8a8a8a"/><rect x="221.34" y="2.6" width="0.9" height="1.4" fill="#8a8a8a"/><rect x="226.40" y="2.6" width="0.9" height="1.4" fill="#8a8a8a"/><rect x="231.47" y="2.6" width="0.9" height="2.6" fill="#cfcfcf"/><rect x="236.54" y="2.6" width="0.9" height="1.4" fill="#8a8a8a"/><rect x="241.60" y="2.6" width="0.9" height="1.4" fill="#8a8a8a"/><rect x="246.67" y="2.6" width="0.9" height="1.4" fill="#8a8a8a"/><rect x="251.73" y="2.6" width="0.9" height="1.4" fill="#8a8a8a"/><rect x="256.80" y="2.6" width="0.9" height="2.6" fill="#cfcfcf"/><rect x="261.87" y="2.6" width="0.9" height="1.4" fill="#8a8a8a"/><rect x="266.93" y="2.6" width="0.9" height="1.4" fill="#8a8a8a"/><rect x="272.00" y="2.6" width="0.9" height="1.4" fill="#8a8a8a"/><rect x="277.06" y="2.6" width="0.9" height="1.4" fill="#8a8a8a"/><rect x="282.13" y="2.6" width="0.9" height="2.6" fill="#cfcfcf"/><rect x="287.20" y="2.6" width="0.9" height="1.4" fill="#8a8a8a"/><rect x="292.26" y="2.6" width="0.9" height="1.4" fill="#8a8a8a"/><rect x="297.33" y="2.6" width="0.9" height="1.4" fill="#8a8a8a"/><rect x="302.39" y="2.6" width="0.9" height="1.4" fill="#8a8a8a"/><rect x="307.46" y="2.6" width="0.9" height="2.6" fill="#cfcfcf"/></svg>
<div class="t" style="left:287.40px;top:722.46px;font-size:5.6px;line-height:5.6px;color:#d0d0d0;transform:scaleX(1.114);transform-origin:0 0;">-60</div>
<div class="t" style="left:312.73px;top:722.46px;font-size:5.6px;line-height:5.6px;color:#d0d0d0;transform:scaleX(1.114);transform-origin:0 0;">-55</div>
<div class="t" style="left:338.06px;top:722.46px;font-size:5.6px;line-height:5.6px;color:#d0d0d0;transform:scaleX(1.114);transform-origin:0 0;">-50</div>
<div class="t" style="left:363.39px;top:722.46px;font-size:5.6px;line-height:5.6px;color:#d0d0d0;transform:scaleX(1.114);transform-origin:0 0;">-45</div>
<div class="t" style="left:388.72px;top:722.46px;font-size:5.6px;line-height:5.6px;color:#d0d0d0;transform:scaleX(1.114);transform-origin:0 0;">-40</div>
<div class="t" style="left:414.05px;top:722.46px;font-size:5.6px;line-height:5.6px;color:#d0d0d0;transform:scaleX(1.114);transform-origin:0 0;">-35</div>
<div class="t" style="left:439.38px;top:722.46px;font-size:5.6px;line-height:5.6px;color:#d0d0d0;transform:scaleX(1.114);transform-origin:0 0;">-30</div>
<div class="t" style="left:464.71px;top:722.46px;font-size:5.6px;line-height:5.6px;color:#d0d0d0;transform:scaleX(1.114);transform-origin:0 0;">-25</div>
<div class="t" style="left:490.04px;top:722.46px;font-size:5.6px;line-height:5.6px;color:#d0d0d0;transform:scaleX(1.114);transform-origin:0 0;">-20</div>
<div class="t" style="left:515.37px;top:722.46px;font-size:5.6px;line-height:5.6px;color:#d0d0d0;transform:scaleX(1.114);transform-origin:0 0;">-15</div>
<div class="t" style="left:540.70px;top:722.46px;font-size:5.6px;line-height:5.6px;color:#d0d0d0;transform:scaleX(1.114);transform-origin:0 0;">-10</div>
<div class="t" style="left:567.53px;top:722.46px;font-size:5.6px;line-height:5.6px;color:#d0d0d0;transform:scaleX(1.208);transform-origin:0 0;">-5</div>
<div class="t" style="left:594.96px;top:722.46px;font-size:5.6px;line-height:5.6px;color:#d0d0d0;transform:scaleX(0.965);transform-origin:0 0;">0</div>
<div class="a" style="left:289px;top:736.6px;width:246.0px;height:3.2px;background:#2a82da;border-radius:1.5px;"></div>
<div class="a" style="left:543.0px;top:736.6px;width:5.5px;height:3.2px;background:#565556;border-radius:1.5px;"></div>
<div class="a" style="left:533.0px;top:734.7px;width:15.5px;height:7px;background:#dcdcdc;border-radius:2px;"></div>
<svg class="a" style="left:553.8px;top:730.9000000000001px" width="20" height="15" viewBox="0 0 20 15"><path d="M0.3 3.6 H3.8 L9.6 0 V13.6 L3.8 10 H0.3 Z" fill="#dadada"/><path d="M12.2 3.4 Q14.6 6.8 12.2 10.4" fill="none" stroke="#dadada" stroke-width="1.5"/><path d="M15.2 0.3 Q19.6 6.8 15.2 13.4" fill="none" stroke="#dadada" stroke-width="1.5"/></svg>
<svg class="a" style="left:580.75px;top:731.45px" width="13.5" height="13.5" viewBox="0 0 13.5 13.5"><path d="M11.40 5.59 L13.42 5.69 L13.42 7.81 L11.40 7.91 L10.86 9.22 L12.21 10.72 L10.72 12.21 L9.22 10.86 L7.91 11.40 L7.81 13.42 L5.69 13.42 L5.59 11.40 L4.28 10.86 L2.78 12.21 L1.29 10.72 L2.64 9.22 L2.10 7.91 L0.08 7.81 L0.08 5.69 L2.10 5.59 L2.64 4.28 L1.29 2.78 L2.78 1.29 L4.28 2.64 L5.59 2.10 L5.69 0.08 L7.81 0.08 L7.91 2.10 L9.22 2.64 L10.72 1.29 L12.21 2.78 L10.86 4.28 Z M9.04 6.75 A2.2950000000000004 2.2950000000000004 0 1 0 4.46 6.75 A2.2950000000000004 2.2950000000000004 0 1 0 9.04 6.75 Z" fill="#d8d8d8" fill-rule="evenodd"/></svg>
<div class="t" style="left:288.70px;top:754.52px;font-size:8.6px;line-height:8.6px;color:#e1e0e1;transform:scaleX(0.858);transform-origin:0 0;">VHS Capture</div>
<div class="t" style="left:572.30px;top:754.52px;font-size:8.6px;line-height:8.6px;color:#e1e0e1;transform:scaleX(0.884);transform-origin:0 0;">-5.0 dB</div>
<svg class="a" style="left:288.6px;top:765px" width="310" height="12" viewBox="0 0 310 12"><rect x="0" y="0.0" width="206.54" height="2.6" fill="#267f26"/><rect x="206.54" y="0.0" width="55.73" height="2.6" fill="#7f7f26"/><rect x="262.27" y="0.0" width="46.13" height="2.6" fill="#7f2626"/><rect x="3.50" y="2.6" width="0.9" height="2.6" fill="#cfcfcf"/><rect x="8.57" y="2.6" width="0.9" height="1.4" fill="#8a8a8a"/><rect x="13.63" y="2.6" width="0.9" height="1.4" fill="#8a8a8a"/><rect x="18.70" y="2.6" width="0.9" height="1.4" fill="#8a8a8a"/><rect x="23.76" y="2.6" width="0.9" height="1.4" fill="#8a8a8a"/><rect x="28.83" y="2.6" width="0.9" height="2.6" fill="#cfcfcf"/><rect x="33.90" y="2.6" width="0.9" height="1.4" fill="#8a8a8a"/><rect x="38.96" y="2.6" width="0.9" height="1.4" fill="#8a8a8a"/><rect x="44.03" y="2.6" width="0.9" height="1.4" fill="#8a8a8a"/><rect x="49.09" y="2.6" width="0.9" height="1.4" fill="#8a8a8a"/><rect x="54.16" y="2.6" width="0.9" height="2.6" fill="#cfcfcf"/><rect x="59.23" y="2.6" width="0.9" height="1.4" fill="#8a8a8a"/><rect x="64.29" y="2.6" width="0.9" height="1.4" fill="#8a8a8a"/><rect x="69.36" y="2.6" width="0.9" height="1.4" fill="#8a8a8a"/><rect x="74.42" y="2.6" width="0.9" height="1.4" fill="#8a8a8a"/><rect x="79.49" y="2.6" width="0.9" height="2.6" fill="#cfcfcf"/><rect x="84.56" y="2.6" width="0.9" height="1.4" fill="#8a8a8a"/><rect x="89.62" y="2.6" width="0.9" height="1.4" fill="#8a8a8a"/><rect x="94.69" y="2.6" width="0.9" height="1.4" fill="#8a8a8a"/><rect x="99.75" y="2.6" width="0.9" height="1.4" fill="#8a8a8a"/><rect x="104.82" y="2.6" width="0.9" height="2.6" fill="#cfcfcf"/><rect x="109.89" y="2.6" width="0.9" height="1.4" fill="#8a8a8a"/><rect x="114.95" y="2.6" width="0.9" height="1.4" fill="#8a8a8a"/><rect x="120.02" y="2.6" width="0.9" height="1.4" fill="#8a8a8a"/><rect x="125.08" y="2.6" width="0.9" height="1.4" fill="#8a8a8a"/><rect x="130.15" y="2.6" width="0.9" height="2.6" fill="#cfcfcf"/><rect x="135.22" y="2.6" width="0.9" height="1.4" fill="#8a8a8a"/><rect x="140.28" y="2.6" width="0.9" height="1.4" fill="#8a8a8a"/><rect x="145.35" y="2.6" width="0.9" height="1.4" fill="#8a8a8a"/><rect x="150.41" y="2.6" width="0.9" height="1.4" fill="#8a8a8a"/><rect x="155.48" y="2.6" width="0.9" height="2.6" fill="#cfcfcf"/><rect x="160.55" y="2.6" width="0.9" height="1.4" fill="#8a8a8a"/><rect x="165.61" y="2.6" width="0.9" height="1.4" fill="#8a8a8a"/><rect x="170.68" y="2.6" width="0.9" height="1.4" fill="#8a8a8a"/><rect x="175.74" y="2.6" width="0.9" height="1.4" fill="#8a8a8a"/><rect x="180.81" y="2.6" width="0.9" height="2.6" fill="#cfcfcf"/><rect x="185.88" y="2.6" width="0.9" height="1.4" fill="#8a8a8a"/><rect x="190.94" y="2.6" width="0.9" height="1.4" fill="#8a8a8a"/><rect x="196.01" y="2.6" width="0.9" height="1.4" fill="#8a8a8a"/><rect x="201.07" y="2.6" width="0.9" height="1.4" fill="#8a8a8a"/><rect x="206.14" y="2.6" width="0.9" height="2.6" fill="#cfcfcf"/><rect x="211.21" y="2.6" width="0.9" height="1.4" fill="#8a8a8a"/><rect x="216.27" y="2.6" width="0.9" height="1.4" fill="#8a8a8a"/><rect x="221.34" y="2.6" width="0.9" height="1.4" fill="#8a8a8a"/><rect x="226.40" y="2.6" width="0.9" height="1.4" fill="#8a8a8a"/><rect x="231.47" y="2.6" width="0.9" height="2.6" fill="#cfcfcf"/><rect x="236.54" y="2.6" width="0.9" height="1.4" fill="#8a8a8a"/><rect x="241.60" y="2.6" width="0.9" height="1.4" fill="#8a8a8a"/><rect x="246.67" y="2.6" width="0.9" height="1.4" fill="#8a8a8a"/><rect x="251.73" y="2.6" width="0.9" height="1.4" fill="#8a8a8a"/><rect x="256.80" y="2.6" width="0.9" height="2.6" fill="#cfcfcf"/><rect x="261.87" y="2.6" width="0.9" height="1.4" fill="#8a8a8a"/><rect x="266.93" y="2.6" width="0.9" height="1.4" fill="#8a8a8a"/><rect x="272.00" y="2.6" width="0.9" height="1.4" fill="#8a8a8a"/><rect x="277.06" y="2.6" width="0.9" height="1.4" fill="#8a8a8a"/><rect x="282.13" y="2.6" width="0.9" height="2.6" fill="#cfcfcf"/><rect x="287.20" y="2.6" width="0.9" height="1.4" fill="#8a8a8a"/><rect x="292.26" y="2.6" width="0.9" height="1.4" fill="#8a8a8a"/><rect x="297.33" y="2.6" width="0.9" height="1.4" fill="#8a8a8a"/><rect x="302.39" y="2.6" width="0.9" height="1.4" fill="#8a8a8a"/><rect x="307.46" y="2.6" width="0.9" height="2.6" fill="#cfcfcf"/></svg>
<div class="t" style="left:287.40px;top:771.46px;font-size:5.6px;line-height:5.6px;color:#d0d0d0;transform:scaleX(1.114);transform-origin:0 0;">-60</div>
<div class="t" style="left:312.73px;top:771.46px;font-size:5.6px;line-height:5.6px;color:#d0d0d0;transform:scaleX(1.114);transform-origin:0 0;">-55</div>
<div class="t" style="left:338.06px;top:771.46px;font-size:5.6px;line-height:5.6px;color:#d0d0d0;transform:scaleX(1.114);transform-origin:0 0;">-50</div>
<div class="t" style="left:363.39px;top:771.46px;font-size:5.6px;line-height:5.6px;color:#d0d0d0;transform:scaleX(1.114);transform-origin:0 0;">-45</div>
<div class="t" style="left:388.72px;top:771.46px;font-size:5.6px;line-height:5.6px;color:#d0d0d0;transform:scaleX(1.114);transform-origin:0 0;">-40</div>
<div class="t" style="left:414.05px;top:771.46px;font-size:5.6px;line-height:5.6px;color:#d0d0d0;transform:scaleX(1.114);transform-origin:0 0;">-35</div>
<div class="t" style="left:439.38px;top:771.46px;font-size:5.6px;line-height:5.6px;color:#d0d0d0;transform:scaleX(1.114);transform-origin:0 0;">-30</div>
<div class="t" style="left:464.71px;top:771.46px;font-size:5.6px;line-height:5.6px;color:#d0d0d0;transform:scaleX(1.114);transform-origin:0 0;">-25</div>
<div class="t" style="left:490.04px;top:771.46px;font-size:5.6px;line-height:5.6px;color:#d0d0d0;transform:scaleX(1.114);transform-origin:0 0;">-20</div>
<div class="t" style="left:515.37px;top:771.46px;font-size:5.6px;line-height:5.6px;color:#d0d0d0;transform:scaleX(1.114);transform-origin:0 0;">-15</div>
<div class="t" style="left:540.70px;top:771.46px;font-size:5.6px;line-height:5.6px;color:#d0d0d0;transform:scaleX(1.114);transform-origin:0 0;">-10</div>
<div class="t" style="left:567.53px;top:771.46px;font-size:5.6px;line-height:5.6px;color:#d0d0d0;transform:scaleX(1.208);transform-origin:0 0;">-5</div>
<div class="t" style="left:594.96px;top:771.46px;font-size:5.6px;line-height:5.6px;color:#d0d0d0;transform:scaleX(0.965);transform-origin:0 0;">0</div>
<div class="a" style="left:289px;top:785.6px;width:194.76px;height:3.2px;background:#2a82da;border-radius:1.5px;"></div>
<div class="a" style="left:491.76px;top:785.6px;width:56.74000000000001px;height:3.2px;background:#565556;border-radius:1.5px;"></div>
<div class="a" style="left:481.76px;top:783.7px;width:15.5px;height:7px;background:#dcdcdc;border-radius:2px;"></div>
<svg class="a" style="left:553.8px;top:779.9000000000001px" width="20" height="15" viewBox="0 0 20 15"><path d="M0.3 3.6 H3.8 L9.6 0 V13.6 L3.8 10 H0.3 Z" fill="#dadada"/><path d="M12.2 3.4 Q14.6 6.8 12.2 10.4" fill="none" stroke="#dadada" stroke-width="1.5"/><path d="M15.2 0.3 Q19.6 6.8 15.2 13.4" fill="none" stroke="#dadada" stroke-width="1.5"/></svg>
<svg class="a" style="left:580.75px;top:780.45px" width="13.5" height="13.5" viewBox="0 0 13.5 13.5"><path d="M11.40 5.59 L13.42 5.69 L13.42 7.81 L11.40 7.91 L10.86 9.22 L12.21 10.72 L10.72 12.21 L9.22 10.86 L7.91 11.40 L7.81 13.42 L5.69 13.42 L5.59 11.40 L4.28 10.86 L2.78 12.21 L1.29 10.72 L2.64 9.22 L2.10 7.91 L0.08 7.81 L0.08 5.69 L2.10 5.59 L2.64 4.28 L1.29 2.78 L2.78 1.29 L4.28 2.64 L5.59 2.10 L5.69 0.08 L7.81 0.08 L7.91 2.10 L9.22 2.64 L10.72 1.29 L12.21 2.78 L10.86 4.28 Z M9.04 6.75 A2.2950000000000004 2.2950000000000004 0 1 0 4.46 6.75 A2.2950000000000004 2.2950000000000004 0 1 0 9.04 6.75 Z" fill="#d8d8d8" fill-rule="evenodd"/></svg>
<div class="a" style="left:619px;top:603px;width:348.5px;height:17px;background:#4c4b4c;border-radius:2px;"></div>
<div class="a" style="left:951px;top:603px;width:16.5px;height:17px;background:#484748;border-left:1px solid #3c3b3c;"></div>
<svg class="a" style="left:954px;top:604px" width="10" height="15" viewBox="0 0 10 15"><path d="M2 5.5 L5 2.5 L8 5.5 M2 9.5 L5 12.5 L8 9.5" fill="none" stroke="#a0a0a0" stroke-width="1"/></svg>
<div class="t" style="left:626.70px;top:607.40px;font-size:9.8px;line-height:9.8px;color:#e1e0e1;transform:scaleX(0.895);transform-origin:0 0;">Fade</div>
<svg class="a" style="left:973.7px;top:604.7px" width="14" height="14" viewBox="0 0 14 14"><path d="M11.82 5.80 L13.91 5.90 L13.91 8.10 L11.82 8.20 L11.26 9.56 L12.66 11.11 L11.11 12.66 L9.56 11.26 L8.20 11.82 L8.10 13.91 L5.90 13.91 L5.80 11.82 L4.44 11.26 L2.89 12.66 L1.34 11.11 L2.74 9.56 L2.18 8.20 L0.09 8.10 L0.09 5.90 L2.18 5.80 L2.74 4.44 L1.34 2.89 L2.89 1.34 L4.44 2.74 L5.80 2.18 L5.90 0.09 L8.10 0.09 L8.20 2.18 L9.56 2.74 L11.11 1.34 L12.66 2.89 L11.26 4.44 Z M9.38 7.00 A2.3800000000000003 2.3800000000000003 0 1 0 4.62 7.00 A2.3800000000000003 2.3800000000000003 0 1 0 9.38 7.00 Z" fill="#d8d8d8" fill-rule="evenodd"/></svg>
<div class="t" style="left:618.30px;top:626.70px;font-size:9.8px;line-height:9.8px;color:#e1e0e1;transform:scaleX(0.929);transform-origin:0 0;">Duration</div>
<div class="a" style="left:657px;top:623px;width:320px;height:16.6px;background:#1f1e1f;"></div>
<div class="t" style="left:664.00px;top:626.70px;font-size:9.8px;line-height:9.8px;color:#e1e0e1;transform:scaleX(0.862);transform-origin:0 0;">300 ms</div>
<div class="a" style="left:977px;top:623px;width:13.5px;height:8.3px;background:#4a494a;"></div>
<div class="a" style="left:977px;top:631.5px;width:13.5px;height:8.3px;background:#4a494a;"></div>
<svg class="a" style="left:977px;top:623px" width="14" height="17" viewBox="0 0 14 17"><path d="M3 6.3 L7 2.5 L11 6.3" fill="none" stroke="#d0d0d0" stroke-width="1.2"/><path d="M3 10.5 L7 14.3 L11 10.5" fill="none" stroke="#d0d0d0" stroke-width="1.2"/></svg>
<div class="a" style="left:1000px;top:602.5px;width:260px;height:17px;background:#4c4b4c;border-radius:2px;"></div>
<div class="t" style="left:1166.33px;top:606.50px;font-size:9.8px;line-height:9.8px;color:#e1e0e1;transform:scaleX(0.916);transform-origin:0 0;">Start Streaming</div>
<div class="a" style="left:1000px;top:621.5px;width:260px;height:17px;background:#4c4b4c;border-radius:2px;"></div>
<div class="t" style="left:1166.31px;top:625.50px;font-size:9.8px;line-height:9.8px;color:#e1e0e1;transform:scaleX(0.916);transform-origin:0 0;">Start Recording</div>
<div class="a" style="left:1000px;top:640.5px;width:260px;height:17px;background:#4c4b4c;border-radius:2px;"></div>
<div class="t" style="left:1156.93px;top:644.50px;font-size:9.8px;line-height:9.8px;color:#e1e0e1;transform:scaleX(0.916);transform-origin:0 0;">Start Virtual Camera</div>
<div class="a" style="left:1000px;top:659.5px;width:260px;height:17px;background:#4c4b4c;border-radius:2px;"></div>
<div class="t" style="left:1172.30px;top:663.50px;font-size:9.8px;line-height:9.8px;color:#e1e0e1;transform:scaleX(0.916);transform-origin:0 0;">Studio Mode</div>
<div class="a" style="left:1000px;top:678.5px;width:260px;height:17px;background:#4c4b4c;border-radius:2px;"></div>
<div class="t" style="left:1181.28px;top:682.50px;font-size:9.8px;line-height:9.8px;color:#e1e0e1;transform:scaleX(0.916);transform-origin:0 0;">Settings</div>
<div class="a" style="left:1000px;top:697.5px;width:260px;height:17px;background:#4c4b4c;border-radius:2px;"></div>
<div class="t" style="left:1190.02px;top:701.50px;font-size:9.8px;line-height:9.8px;color:#e1e0e1;transform:scaleX(0.916);transform-origin:0 0;">Exit</div>
<svg class="a" style="left:1081px;top:884.5px" width="17" height="12" viewBox="0 0 17 12"><circle cx="8.5" cy="6" r="2.6" fill="#8a8a8a"/><path d="M5 2.5 Q3 6 5 9.5 M12 2.5 Q14 6 12 9.5 M2.6 1 Q-0.5 6 2.6 11 M14.4 1 Q17.5 6 14.4 11" fill="none" stroke="#8a8a8a" stroke-width="1.1"/></svg>
<div class="t" style="left:1101.60px;top:885.70px;font-size:9.8px;line-height:9.8px;color:#d8d8d8;transform:scaleX(0.926);transform-origin:0 0;">LIVE: 00:00:00</div>
<svg class="a" style="left:1171px;top:885.5px" width="9" height="9" viewBox="0 0 9 9"><circle cx="4.5" cy="4.5" r="4.3" fill="#8a8a8a"/></svg>
<div class="t" style="left:1188.40px;top:885.70px;font-size:9.8px;line-height:9.8px;color:#d8d8d8;transform:scaleX(0.902);transform-origin:0 0;">REC: 00:00:00</div>
</body></html>
